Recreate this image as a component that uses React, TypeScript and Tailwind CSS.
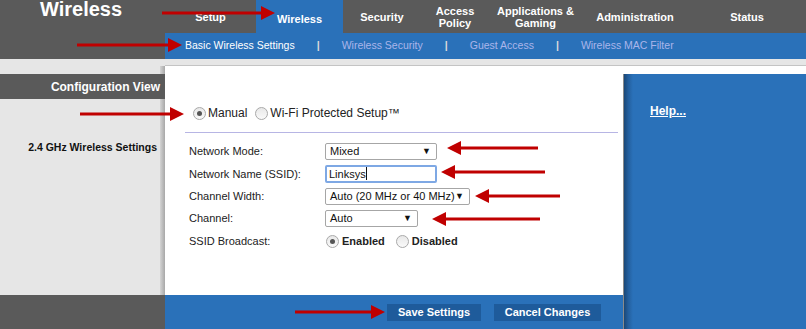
import React from 'react';

const NAV = [
  { label: 'Setup', w: 'w-[91px]' },
  { label: 'Wireless', w: 'w-[87px]', active: true },
  { label: 'Security', w: 'w-[78px]' },
  { label: 'Access\nPolicy', w: 'w-[68px]' },
  { label: 'Applications &\nGaming', w: 'w-[93px]' },
  { label: 'Administration', w: 'w-[106px]' },
  { label: 'Status', w: 'w-[118px]' },
];

const ARROWS = [
  { from: 162, to: 275, y: 13 },
  { from: 77, to: 182, y: 45 },
  { from: 80, to: 184, y: 114 },
  { from: 538, to: 447, y: 148 },
  { from: 545, to: 441, y: 172 },
  { from: 560, to: 475, y: 196 },
  { from: 540, to: 432, y: 219 },
  { from: 295, to: 385, y: 312 },
];

const Radio = ({ checked }: { checked?: boolean }) => (
  <span className="w-[13px] h-[13px] rounded-full border border-[#a9a9a9] bg-gradient-to-b from-[#e8e8e8] to-[#fafafa] flex items-center justify-center shrink-0">
    {checked && <span className="w-[5px] h-[5px] rounded-full bg-[#555]" />}
  </span>
);

const Select = ({ value, w }: { value: string; w: string }) => (
  <div className={`${w} h-[17px] border border-[#a6a6a6] rounded-[2px] bg-white flex items-center justify-between pl-[4px] pr-[5px] text-[11px] text-[#111] whitespace-nowrap`}>
    <span>{value}</span>
    <span className="text-[9px] text-[#111]">▼</span>
  </div>
);

const Row = ({ label, children, h = 'h-[22.5px]' }: { label: string; children: React.ReactNode; h?: string }) => (
  <div className={`flex items-center ${h}`}>
    <div className="w-[136px] text-[11px] text-[#222]">{label}</div>
    {children}
  </div>
);

const Shadow = ({ className = '' }: { className?: string }) => (
  <div className={`w-[5px] bg-gradient-to-r from-[#d4d4d4] to-[#a8a8a8] ${className}`} />
);

export default function App() {
  return (
    <div className="w-[806px] h-[329px] relative overflow-hidden bg-[#e6e6e6] font-['Liberation_Sans',Arial,sans-serif]">
      {/* top nav */}
      <div className="flex h-[33px] bg-[#5a5a5a]">
        <div className="w-[165px] pl-[40px] text-[20px] font-bold text-white leading-[19px]">Wireless</div>
        {NAV.map((n) => (
          <div
            key={n.label}
            className={`${n.w} flex items-center justify-center text-center whitespace-pre-line text-[11px] leading-[12px] font-bold text-white ${n.active ? 'bg-[#2a71b9] pt-[4px]' : ''}`}
          >
            {n.label}
          </div>
        ))}
      </div>

      {/* sub nav */}
      <div className="flex h-[26px]">
        <div className="w-[165px] bg-[#5a5a5a]" />
        <div className="flex-1 bg-[#2a71b9] flex items-center pl-[20px] text-[10.5px] text-[#aab5ea]">
          <span className="text-white">Basic Wireless Settings</span>
          <span className="mx-[22px] text-[#dcdcdc] font-bold">|</span>
          <span>Wireless Security</span>
          <span className="mx-[22px] text-[#dcdcdc] font-bold">|</span>
          <span>Guest Access</span>
          <span className="mx-[22px] text-[#dcdcdc] font-bold">|</span>
          <span>Wireless MAC Filter</span>
        </div>
      </div>

      {/* body */}
      <div className="flex h-[270px]">
        {/* left column */}
        <div className="w-[165px] flex flex-col">
          <div className="h-[15px] flex">
            <div className="flex-1" />
            <Shadow className="mt-[7px]" />
          </div>
          <div className="h-[25px] bg-[#5a5a5a] flex items-center justify-end pr-[5px] text-[12px] font-bold text-white">
            Configuration View
          </div>
          <div className="flex-1 flex">
            <div className="flex-1 pt-[41px] pr-[3px] text-right text-[10.5px] font-bold text-[#111]">
              2.4 GHz Wireless Settings
            </div>
            <Shadow />
          </div>
          <div className="h-[34px] bg-[#5a5a5a]" />
        </div>

        {/* center column */}
        <div className="w-[458px] flex flex-col">
          <div className="h-[7px] bg-[#e6e6e6] border-b border-[#c4c4c4]" />
          <div className="flex-1 bg-white pl-[20px] pr-[5px]">
            <div className="mt-[40px] flex items-center h-[14px] pl-[8px] text-[12px] text-[#222]">
              <Radio checked />
              <span className="ml-[2px]">Manual</span>
              <span className="ml-[8px]"><Radio /></span>
              <span className="ml-[2px]">Wi-Fi Protected Setup™</span>
            </div>
            <div className="mt-[12px] h-px bg-[#b7b5e4]" />
            <div className="mt-[7px] pl-[4px]">
              <Row label="Network Mode:">
                <Select value="Mixed" w="w-[112px]" />
              </Row>
              <Row label="Network Name (SSID):">
                <div className="w-[112px] h-[18px] border-2 border-[#7ea8e4] rounded-[2px] flex items-center pl-[2px] text-[11px] text-[#111]">
                  Linksys<span className="w-px h-[13px] bg-[#111]" />
                </div>
              </Row>
              <Row label="Channel Width:">
                <Select value="Auto (20 MHz or 40 MHz)" w="w-[145px]" />
              </Row>
              <Row label="Channel:" h="h-[22px]">
                <Select value="Auto" w="w-[93px]" />
              </Row>
              <Row label="SSID Broadcast:" h="h-[24px]">
                <div className="flex items-center pl-[1px] text-[11px] font-bold text-[#222]">
                  <Radio checked />
                  <span className="ml-[3px]">Enabled</span>
                  <span className="ml-[11px]"><Radio /></span>
                  <span className="ml-[3px]">Disabled</span>
                </div>
              </Row>
            </div>
          </div>
          <div className="h-[34px] bg-[#2a71b9] flex items-center pl-[222px] gap-[13px]">
            <div className="w-[94px] h-[17px] bg-[#1e5b9b] flex items-center justify-center text-[11px] font-bold text-white">Save Settings</div>
            <div className="w-[107px] h-[17px] bg-[#1e5b9b] flex items-center justify-center text-[11px] font-bold text-white">Cancel Changes</div>
          </div>
        </div>

        {/* right column */}
        <div className="flex-1 flex flex-col">
          <div className="h-[7px] bg-[#e6e6e6] border-b border-[#c4c4c4]" />
          <div className="h-[8px] bg-white" />
          <div className="flex-1 flex bg-[#2a71b9]">
            <div className="w-[10px] bg-gradient-to-r from-[#1a4878] via-[#24609f] to-[#2a71b9] border-l border-[#8a8a8a]" />
            <div className="pl-[17px] pt-[24px]">
              <span className="text-[12px] font-bold text-white underline">Help...</span>
            </div>
          </div>
        </div>
      </div>

      {/* red annotation arrows */}
      <svg className="absolute inset-0 pointer-events-none" width="806" height="329">
        {ARROWS.map((a, i) => {
          const dir = a.to > a.from ? 1 : -1;
          const base = a.to - dir * 14;
          return (
            <g key={i} fill="#c00000">
              <rect x={Math.min(a.from, base)} y={a.y - 1.5} width={Math.abs(base - a.from)} height={3} />
              <polygon points={`${a.to},${a.y} ${base},${a.y - 7} ${base},${a.y + 7}`} />
            </g>
          );
        })}
      </svg>
    </div>
  );
}
